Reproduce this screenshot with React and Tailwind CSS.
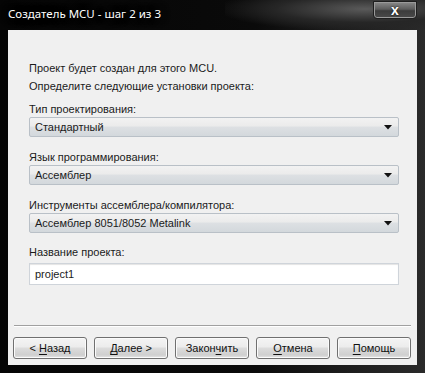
import React from "react";

const fields = [
  { label: "Тип проектирования:", value: "Стандартный" },
  { label: "Язык программирования:", value: "Ассемблер" },
  { label: "Инструменты ассемблера/компилятора:", value: "Ассемблер 8051/8052 Metalink" },
];

function Combo({ value }) {
  return (
    <div className="flex h-[20px] items-center justify-between rounded-[2px] border border-[#b9c0c7] bg-[linear-gradient(#f2f2f2_0%,#ebebeb_45%,#dde0e3_50%,#d3d8dc_100%)] pl-[5px] pr-[6px]">
      <span>{value}</span>
      <svg width="8" height="5" viewBox="0 0 8 5">
        <path d="M0 0H8L4 4.5Z" fill="#111" />
      </svg>
    </div>
  );
}

function Btn({ pre = "", u, post = "" }) {
  return (
    <button className="flex h-[22px] w-[74px] items-center justify-center rounded-[3px] border border-[#707070] bg-[linear-gradient(#f4f4f4_0%,#ececec_45%,#dcdcdc_50%,#cfcfcf_85%,#e6e6e6_100%)] text-[11px] text-[#111] shadow-[inset_0_0_0_1px_#fbfbfb]">
      <span className="whitespace-pre">
        {pre}
        <span className="underline underline-offset-2">{u}</span>
        {post}
      </span>
    </button>
  );
}

export default function App() {
  return (
    <div className="relative h-[373px] w-[425px] overflow-hidden bg-[linear-gradient(90deg,#050505_0%,#0a0a0a_60%,#1c1c1c_80%,#2a2a2a_100%)] font-['Liberation_Sans',sans-serif]">
      <div className="pointer-events-none absolute right-0 top-0 h-[30px] w-[200px] bg-[radial-gradient(ellipse_at_70%_30%,#5a5a5a_0%,#262626_45%,transparent_75%)]" />
      <div className="relative flex h-[30px] items-start">
        <span className="ml-[8px] mt-[6px] font-['Noto_Sans',sans-serif] text-[11.5px] leading-[16px] text-white [text-shadow:0_0_6px_#000,0_0_10px_#000]">
          Создатель MCU - шаг 2 из 3
        </span>
        <div className="absolute right-[8px] top-[1px] flex h-[18px] w-[44px] items-center justify-center rounded-b-[4px] border border-[#1e1e1e] bg-[linear-gradient(#8a8a8a_0%,#5c5c5c_45%,#3c3c3c_55%,#4a4a4a_100%)] shadow-[inset_0_0_0_1px_#9a9a9a]">
          <span className="text-[14px] font-bold leading-none text-white [text-shadow:0_0_2px_#000]">x</span>
        </div>
      </div>
      <div className="ml-[8px] flex h-[335px] w-[409px] flex-col bg-[#f0f0f0] text-[11px] leading-[16px] text-[#1b1b1b]">
        <div className="flex flex-col pl-[21px] pr-[18px] pt-[29px]">
          <div className="h-[18px] leading-[18px]">Проект будет создан для этого MCU.</div>
          <div className="mb-[6px] h-[18px] leading-[18px]">Определите следующие установки проекта:</div>
          {fields.map((f) => (
            <div key={f.label} className="mb-[12px] flex flex-col">
              <div className="h-[16px]">{f.label}</div>
              <Combo value={f.value} />
            </div>
          ))}
          <div className="-mt-[1px] flex flex-col">
            <div className="mb-[3px] h-[16px]">Название проекта:</div>
            <div className="flex h-[22px] items-center border border-[#cfd4da] bg-white pl-[5px] shadow-[inset_0_1px_1px_#e4e4e4]">
              project1
            </div>
          </div>
        </div>
        <div className="mx-[6px] mt-[40px] h-[2px] border-t border-b border-t-[#a0a0a0] border-b-white" />
        <div className="mt-[10px] flex gap-[7px] pl-[5px]">
          <Btn pre="< " u="Н" post="азад" />
          <Btn u="Д" post="алее >" />
          <Btn pre="Закон" u="ч" post="ить" />
          <Btn u="О" post="тмена" />
          <Btn u="П" post="омощь" />
        </div>
      </div>
    </div>
  );
}
